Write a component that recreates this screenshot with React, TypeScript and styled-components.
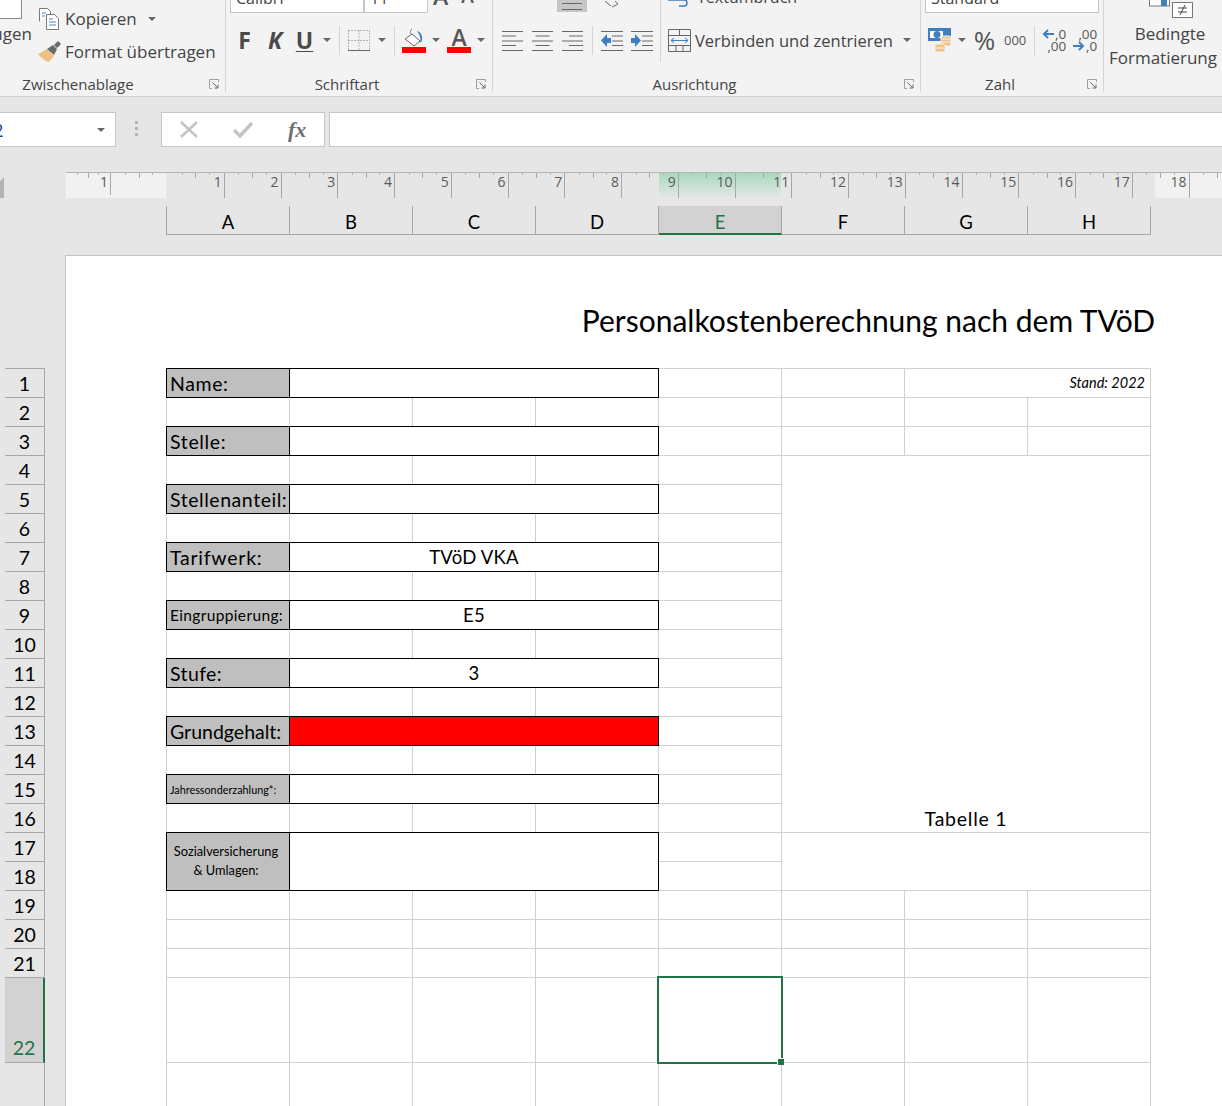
import React from 'react';
import styled, { createGlobalStyle } from 'styled-components';

const UI_FONT = `"Open Sans", "Noto Sans", sans-serif`;
const SHEET_FONT = `Lato, "Noto Sans", sans-serif`;
const COLUMNS = ['A', 'B', 'C', 'D', 'E', 'F', 'G', 'H'];
const GREEN = '#217346';

const GlobalStyle = createGlobalStyle`
  html, body {
    margin: 0;
    padding: 0;
    background: #e6e6e6;
    overflow: hidden;
  }
`;

const Page = styled.div`
  width: 1222px;
  height: 1106px;
  overflow: hidden;
  background: #e6e6e6;
  display: flex;
  flex-direction: column;
  font-family: ${UI_FONT};
`;

/* ---------- ribbon ---------- */

const Ribbon = styled.div`
  height: 96px;
  flex: none;
  display: flex;
  background: #f3f3f3;
  border-bottom: 1px solid #d2d2d2;
  overflow: hidden;
  color: #444;
`;

const Group = styled.div<{ $width: number; $offset?: number }>`
  width: ${(p) => p.$width}px;
  margin-left: ${(p) => p.$offset ?? 0}px;
  flex: none;
  height: 92px;
  display: flex;
  flex-direction: column;
  border-right: 1px solid #d4d4d4;
`;

const GroupBody = styled.div`
  height: 73px;
  flex: none;
  display: flex;
`;

const GroupLabel = styled.div`
  height: 22px;
  flex: none;
  display: flex;
  align-items: center;
  font-size: 15px;
  color: #444;
`;

const GroupTitle = styled.span`
  flex: 1;
  text-align: center;
`;

const LauncherSlot = styled.span`
  width: 24px;
  display: flex;
  justify-content: flex-end;
  padding-right: 6px;
  box-sizing: border-box;
`;

const Stack = styled.div<{ $width?: number; $divider?: boolean }>`
  width: ${(p) => (p.$width ? `${p.$width}px` : 'auto')};
  flex: ${(p) => (p.$width ? 'none' : '1')};
  height: ${(p) => (p.$divider ? '62px' : 'auto')};
  border-right: ${(p) => (p.$divider ? '1px solid #d4d4d4' : 'none')};
`;

const TopRow = styled.div<{ $left?: number }>`
  height: 13px;
  padding-left: ${(p) => p.$left ?? 0}px;
  display: flex;
  overflow: hidden;
`;

const ToolRow = styled.div<{ $left?: number }>`
  height: 30px;
  margin-top: 12px;
  padding-left: ${(p) => p.$left ?? 0}px;
  display: flex;
  align-items: center;
`;

const Combo = styled.div<{ $width: number }>`
  width: ${(p) => p.$width}px;
  height: 13px;
  box-sizing: border-box;
  flex: none;
  background: #fff;
  border: 1px solid #c6c6c6;
  border-top: none;
  padding-left: 5px;
  font-size: 16px;
  line-height: 20px;
  overflow: hidden;
`;

const ComboText = styled.div`
  margin-top: -12px;
`;

const ClippedGlyph = styled.span<{ $size: number; $left: number }>`
  margin-left: ${(p) => p.$left}px;
  margin-top: -18px;
  font-size: ${(p) => p.$size}px;
  line-height: 28px;
  font-weight: 600;
  color: #555;
`;

const Tool = styled.span<{ $left?: number; $width?: number }>`
  margin-left: ${(p) => p.$left ?? 0}px;
  width: ${(p) => (p.$width ? `${p.$width}px` : 'auto')};
  flex: none;
  display: flex;
  align-items: center;
  justify-content: center;
`;

const FontStyle = styled(Tool)<{ $italic?: boolean; $underline?: boolean }>`
  font-size: 23px;
  font-weight: 700;
  line-height: 26px;
  color: #4a4a4a;
  font-style: ${(p) => (p.$italic ? 'italic' : 'normal')};
  text-decoration: ${(p) => (p.$underline ? 'underline' : 'none')};
  text-decoration-thickness: 1px;
  text-underline-offset: 2px;
`;

const Caret = styled.span<{ $left: number }>`
  margin-left: ${(p) => p.$left}px;
  flex: none;
  width: 0;
  height: 0;
  border-left: 4px solid transparent;
  border-right: 4px solid transparent;
  border-top: 4px solid #666;
`;

const ToolDivider = styled.span<{ $left: number }>`
  margin-left: ${(p) => p.$left}px;
  flex: none;
  width: 1px;
  height: 29px;
  background: #d4d4d4;
`;

const ColorTool = styled(Tool)`
  flex-direction: column;
  width: 24px;
`;

const ColorLetter = styled.span`
  font-size: 23px;
  line-height: 20px;
  font-weight: 600;
  color: #555;
`;

const ColorBar = styled.span`
  width: 24px;
  height: 6px;
  background: #ff0000;
`;

const ClipboardColumn = styled.div`
  width: 77px;
  flex: none;
  display: flex;
  flex-direction: column;
  align-items: flex-end;
  font-size: 17px;
  line-height: 22px;
`;

const PasteSheet = styled.div`
  width: 23px;
  height: 19px;
  margin-right: 10px;
  box-sizing: border-box;
  background: #fff;
  border: 1px solid #8a8a8a;
  border-top: none;
`;

const PasteLabel = styled.span`
  margin-top: 4px;
  white-space: nowrap;
`;

const ClipboardActions = styled.div`
  margin-left: 6px;
  padding-top: 8px;
  display: flex;
  flex-direction: column;
  gap: 12px;
`;

const ClipboardAction = styled.div`
  height: 21px;
  display: flex;
  align-items: center;
  font-size: 17px;
  white-space: nowrap;
`;

const ActionIcon = styled.span<{ $inset?: number }>`
  width: ${(p) => 27 - (p.$inset ?? 0)}px;
  padding-left: ${(p) => p.$inset ?? 0}px;
  flex: none;
  display: flex;
  justify-content: flex-start;
`;

const MergeText = styled.span`
  margin-left: 4px;
  font-size: 16.5px;
  white-space: nowrap;
`;

const WrapText = styled.div`
  margin-left: 7px;
  margin-top: -13px;
  font-size: 16px;
  line-height: 20px;
  white-space: nowrap;
`;

const Highlight = styled.span<{ $left: number }>`
  margin-left: ${(p) => p.$left}px;
  width: 30px;
  height: 12px;
  flex: none;
  background: #c6c6c6;
  display: flex;
  justify-content: center;
`;

const PercentSign = styled(Tool)`
  font-size: 26px;
  line-height: 30px;
  color: #555;
`;

const Thousands = styled(Tool)`
  font-size: 13px;
  color: #555;
`;

const DecimalTool = styled(Tool)`
  flex-direction: column;
  align-items: flex-end;
  font-size: 13.5px;
  line-height: 12.5px;
  color: #555;
`;

const DecimalLine = styled.span`
  display: flex;
  align-items: center;
  gap: 1px;
`;

const StylesColumn = styled.div`
  display: flex;
  flex-direction: column;
  align-items: center;
  font-size: 17px;
  line-height: 24px;
  white-space: nowrap;
  width: 114px;
  padding-left: 2px;
`;

const CondFormatSlot = styled.span`
  margin-left: 18px;
  height: 19px;
`;

const BedingtLabel = styled.span`
  margin-top: 3px;
  padding-left: 14px;
`;

/* ---------- formula bar ---------- */

const FormulaBar = styled.div`
  height: 75px;
  flex: none;
  padding-top: 15px;
  box-sizing: border-box;
  display: flex;
  align-items: flex-start;
`;

const FieldBox = styled.div<{ $width?: number; $left?: number }>`
  height: 35px;
  box-sizing: border-box;
  width: ${(p) => (p.$width ? `${p.$width}px` : 'auto')};
  flex: ${(p) => (p.$width ? 'none' : '1')};
  margin-left: ${(p) => p.$left ?? 0}px;
  margin-right: ${(p) => (p.$width ? 0 : -4)}px;
  background: #fff;
  border: 1px solid #c6c6c6;
  display: flex;
  align-items: center;
`;

const NameText = styled.span`
  margin-left: 13px;
  width: 64px;
  flex: none;
  font-size: 18px;
  color: #1f3f8f;
`;

const Grip = styled.div`
  margin-left: 19px;
  margin-top: 9px;
  width: 3px;
  height: 15px;
  background: repeating-linear-gradient(to bottom, #b4b4b4 0 3px, transparent 3px 6px);
`;

const FormulaIcon = styled.span<{ $left: number }>`
  margin-left: ${(p) => p.$left}px;
  display: flex;
`;

const FxText = styled.span`
  margin-left: 35px;
  font-family: "Liberation Serif", serif;
  font-style: italic;
  font-weight: 700;
  font-size: 22px;
  color: #707070;
`;

/* ---------- ruler and column headers ---------- */

const RulerRow = styled.div`
  height: 26px;
  flex: none;
  display: flex;
`;

const RulerCorner = styled.div`
  width: 4px;
  height: 21px;
  margin-top: 5px;
  margin-right: 62px;
  flex: none;
  background: #b4b4b4;
  clip-path: polygon(0 20%, 100% 0, 100% 100%, 0 100%);
`;

const Ruler = styled.div`
  flex: 1;
  display: flex;
  overflow: hidden;
  border-top: 1px solid #b4b4b4;
  background:
    linear-gradient(to bottom, #a6dabd 0%, #e6e6e6 100%) 593px 0 / 122px 100% no-repeat,
    linear-gradient(to right, #f1f1f1 0 100px, #e6e6e6 100px 1089px, #f1f1f1 1089px);
`;

const RulerUnit = styled.div<{ $width?: number; $noTick?: boolean; $margin?: boolean }>`
  width: ${(p) => p.$width ?? 56.75}px;
  flex: none;
  box-sizing: border-box;
  padding-right: 2px;
  text-align: right;
  font-size: 14px;
  line-height: 18px;
  color: #5a5a5a;
  border-right: 1px solid ${(p) => (p.$noTick ? 'transparent' : '#a6a6a6')};
  ${(p) => (p.$margin ? 'height: 22px;' : '')}
  background:
    linear-gradient(#a6a6a6, #a6a6a6) 50% 0 / 1px 5px no-repeat,
    linear-gradient(#b4b4b4, #b4b4b4) 25% 0 / 1px 2px no-repeat,
    linear-gradient(#b4b4b4, #b4b4b4) 75% 0 / 1px 2px no-repeat;
`;

const ColumnHeaderRow = styled.div`
  height: 29px;
  flex: none;
  margin: 8px 0 20px 166px;
  display: flex;
  align-self: flex-start;
  border-left: 1px solid #a6a6a6;
`;

const ColumnHeader = styled.div<{ $selected?: boolean }>`
  width: 123px;
  box-sizing: border-box;
  display: flex;
  align-items: center;
  justify-content: center;
  padding-top: ${(p) => (p.$selected ? 4 : 3)}px;
  font-family: ${SHEET_FONT};
  font-size: 18.5px;
  background: ${(p) => (p.$selected ? '#d2d2d2' : 'transparent')};
  color: ${(p) => (p.$selected ? GREEN : '#000')};
  border-right: 1px solid #a6a6a6;
  border-bottom: ${(p) => (p.$selected ? `2px solid ${GREEN}` : '1px solid #a6a6a6')};
`;

/* ---------- sheet ---------- */

const SheetArea = styled.div`
  flex: 1;
  min-height: 0;
  display: flex;
`;

const Gutter = styled.div`
  width: 65px;
  flex: none;
  box-sizing: border-box;
  padding: 113px 20px 0 5px;
  display: flex;
`;

const RowHeaders = styled.div`
  flex: 1;
  border-top: 1px solid #a6a6a6;
  border-right: 1px solid #a6a6a6;
`;

const RowHeader = styled.div<{ $selected?: boolean; $height?: number }>`
  height: ${(p) => p.$height ?? 29}px;
  box-sizing: border-box;
  margin-right: ${(p) => (p.$selected ? '-1px' : 0)};
  padding-bottom: ${(p) => (p.$selected ? 1 : 0)}px;
  display: flex;
  align-items: flex-end;
  justify-content: center;
  font-family: ${SHEET_FONT};
  font-size: 19.5px;
  line-height: 26px;
  background: ${(p) => (p.$selected ? '#d2d2d2' : 'transparent')};
  color: ${(p) => (p.$selected ? GREEN : '#000')};
  border-bottom: 1px solid #a6a6a6;
  border-right: ${(p) => (p.$selected ? `2px solid ${GREEN}` : 'none')};
`;

const Sheet = styled.div`
  flex: 1;
  background: #fff;
  border-left: 1px solid #c6c6c6;
  border-top: 1px solid #c6c6c6;
  padding-left: 100px;
  font-family: ${SHEET_FONT};
  color: #000;
`;

const Title = styled.div`
  height: 112px;
  box-sizing: border-box;
  padding: 45px 67px 0 0;
  text-align: right;
  font-size: 30px;
  line-height: 38px;
  white-space: nowrap;
`;

const Grid = styled.div`
  width: 984px;
  display: grid;
  grid-template-columns: repeat(8, 123px);
  grid-template-rows: repeat(21, 29px) 85px 85px;
  border-left: 1px solid #d0d0d0;
  border-top: 1px solid #d0d0d0;
`;

const Cell = styled.div<{ $cols?: number; $rows?: number }>`
  grid-column: span ${(p) => p.$cols ?? 1};
  grid-row: span ${(p) => p.$rows ?? 1};
  box-sizing: border-box;
  border-right: 1px solid #d0d0d0;
  border-bottom: 1px solid #d0d0d0;
`;

const Boxed = styled(Cell)`
  margin: -1px 0 0 -1px;
  border: 1px solid #000;
`;

const LabelCell = styled(Boxed)<{ $size?: number; $tracking?: number }>`
  background: #bfbfbf;
  display: flex;
  align-items: flex-end;
  padding: 0 0 1px 3px;
  font-size: ${(p) => p.$size ?? 19.5}px;
  letter-spacing: ${(p) => p.$tracking ?? 0.55}px;
  line-height: 25px;
  white-space: nowrap;
`;

const WrappedLabelCell = styled(Boxed)`
  background: #bfbfbf;
  display: flex;
  align-items: center;
  justify-content: center;
  text-align: center;
  padding: 0 4px 2px 0;
  font-size: 12.8px;
  line-height: 19px;
`;

const ValueCell = styled(Boxed)<{ $fill?: string }>`
  grid-column: span 3;
  background: ${(p) => p.$fill ?? 'transparent'};
  display: flex;
  align-items: flex-end;
  justify-content: center;
  padding-bottom: 1px;
  font-size: 18.5px;
  letter-spacing: 0.25px;
  line-height: 26px;
`;

const StandCell = styled(Cell)`
  display: flex;
  align-items: center;
  justify-content: flex-end;
  padding: 0 5px 1px 0;
  font-size: 14.5px;
  font-style: italic;
`;

const TableNote = styled(Cell)`
  display: flex;
  align-items: flex-end;
  justify-content: center;
  font-size: 19.5px;
  letter-spacing: 0.75px;
  line-height: 26px;
`;

const SelectedCell = styled(Cell)`
  position: relative;
  margin: -2px -1px -1px -2px;
  border: 2px solid ${GREEN};
`;

const FillHandle = styled.span`
  position: absolute;
  right: -3px;
  bottom: -3px;
  width: 6px;
  height: 6px;
  background: ${GREEN};
  border: 1px solid #fff;
  border-width: 1px 0 0 1px;
`;

/* ---------- icons ---------- */

const Launcher = () => (
  <svg width="10" height="10" viewBox="0 0 10 10" fill="none">
    <path d="M9.5 3V.5H.5v9H3" stroke="#a0a0a0" />
    <path d="M3.5 3.5l5 5M9 5.5V9H5.5" stroke="#666" />
  </svg>
);

const CopyIcon = () => (
  <svg width="21" height="22" viewBox="0 0 21 22" fill="none">
    <path d="M.5 13.5V.5h8l3 3v3" stroke="#7a7a7a" fill="#fff" />
    <path d="M7.5 6.5h8l4 4v11h-12z" stroke="#7a7a7a" fill="#fff" />
    <path d="M10 11h4M10 14h7M10 17h7M3 5h4M3 8h3" stroke="#4a86c0" />
  </svg>
);

const BrushIcon = () => (
  <svg width="24" height="21" viewBox="0 0 24 21">
    <path d="M0 13l9-5 7 7-5 6C7 20 3 17 0 13z" fill="#edc186" />
    <path d="M9 8l6-4 4 4-3 6z" fill="#6a6a6a" />
    <path d="M16 4l4-4 3 3-4 4z" fill="#6a6a6a" />
  </svg>
);

const BordersIcon = () => (
  <svg width="22" height="21" viewBox="0 0 22 21" fill="none">
    <path d="M.5.5h21M.5.5v20M21.5.5v20M11 .5v20M.5 10.5h21" stroke="#777" strokeDasharray="1 2" />
    <path d="M0 20.5h22" stroke="#666" />
  </svg>
);

const FillIcon = () => (
  <svg width="24" height="26" viewBox="0 -2 24 26" fill="none">
    <path d="M10 5l8 7-6 5-9-7z" fill="#fff" stroke="#666" />
    <path d="M10 0c-2 1-2 4 0 6" stroke="#777" />
    <path d="M15 2c4 1 6 5 5 10l-2 2c1-4 0-8-3-12z" fill="#4a86c0" />
    <rect x="0" y="18" width="24" height="6" fill="#ff0000" />
  </svg>
);

const AlignIcon = ({ align }: { align: 'left' | 'center' | 'right' }) => {
  const short = 14;
  const x = align === 'left' ? 0 : align === 'center' ? 3.5 : 7;
  return (
    <svg width="21" height="21" viewBox="0 0 21 21" stroke="#666">
      <path d="M0 1.5h21M0 11h21M0 20.5h21" />
      <path d={`M${x} 6h${short}M${x} 15.5h${short}`} />
    </svg>
  );
};

const IndentIcon = ({ increase }: { increase?: boolean }) => (
  <svg width="22" height="21" viewBox="0 0 22 21">
    <path d="M0 1.5h22M0 20.5h22M11 6h11M11 11h11M11 15.5h11" stroke="#666" fill="none" />
    {increase ? (
      <path d="M0 8h4V4l6 6.500-6 6.500v-4H0z" fill="#3f7fbf" />
    ) : (
      <path d="M10 8H6V4L0 10.500l6 6.500v-4h4z" fill="#3f7fbf" />
    )}
  </svg>
);

const MergeIcon = () => (
  <svg width="23" height="23" viewBox="0 0 23 23" fill="none">
    <path d="M.5.500h22v22H.5zM.5 6.500h22M.5 16.500h22M11.500.500v6M8 16.500v6M15 16.500v6" stroke="#666" />
    <path d="M3 11.500h17M6 9l-3 2.500L6 14M17 9l3 2.500-3 2.500" stroke="#3f7fbf" />
  </svg>
);

const MoneyIcon = () => (
  <svg width="24" height="24" viewBox="0 0 24 24">
    <path d="M0 0h23v13H0z" fill="#3f7fbf" />
    <rect x="2" y="3" width="13" height="7" fill="#fff" />
    <circle cx="9" cy="6.500" r="3.500" fill="#3f7fbf" />
    <rect x="13" y="8" width="10" height="10" rx="2" fill="#f0c388" stroke="#f3f3f3" />
    <path d="M14 11h8M14 14h8" stroke="#f3f3f3" />
    <rect x="7" y="16" width="10" height="8" rx="2" fill="#f0c388" stroke="#f3f3f3" />
    <path d="M8 20h8" stroke="#f3f3f3" />
  </svg>
);

const SmallArrow = ({ right }: { right?: boolean }) => (
  <svg width="12" height="10" viewBox="0 0 12 10" fill="none" stroke="#3f7fbf" strokeWidth="2">
    {right ? <path d="M0 5h10M6 1l4 4-4 4" /> : <path d="M12 5H2M6 1L2 5l4 4" />}
  </svg>
);

const CondFormatIcon = () => (
  <svg width="46" height="19" viewBox="0 0 46 19">
    <rect x="0.500" y="-4" width="20" height="10" fill="#fff" stroke="#777" />
    <rect x="12" y="-4" width="6" height="10" fill="#3f7fbf" />
    <rect x="23.500" y="2.500" width="20" height="15" fill="#fff" stroke="#777" />
    <path d="M29 8h9M29 12h9M36 5l-5 10" stroke="#444" fill="none" />
  </svg>
);

const CrossIcon = () => (
  <svg width="20" height="17" viewBox="0 0 20 17" stroke="#c4c4c4" strokeWidth="2.500" fill="none">
    <path d="M2 1l16 15M18 1L2 16" />
  </svg>
);

const CheckIcon = () => (
  <svg width="20" height="17" viewBox="0 0 20 17" stroke="#c4c4c4" strokeWidth="3.500" fill="none">
    <path d="M1 9l6 6L19 2" />
  </svg>
);

/* ---------- sheet data ---------- */

interface FormRow {
  label: string;
  value?: string;
  size?: number;
  tracking?: number;
  fill?: string;
}

const formRows: FormRow[] = [
  { label: 'Stellenanteil:' },
  { label: 'Tarifwerk:', value: 'TVöD VKA', tracking: 0.75 },
  { label: 'Eingruppierung:', value: 'E5', size: 15.5, tracking: 0.35 },
  { label: 'Stufe:', value: '3', tracking: 0.4 },
  { label: 'Grundgehalt:', fill: '#ff0000', tracking: 0 },
  { label: 'Jahressonderzahlung*:', size: 10.8, tracking: 0 },
];

const plainCells = (count: number) =>
  Array.from({ length: count }, (_, i) => <Cell key={i} />);

const App = () => {
  const rulerNumbers = Array.from({ length: 19 }, (_, i) => i + 1);
  const rowNumbers = Array.from({ length: 21 }, (_, i) => i + 1);

  return (
    <Page>
      <GlobalStyle />
      <Ribbon>
        <Group $width={270} $offset={-45}>
          <GroupBody>
            <ClipboardColumn>
              <PasteSheet />
              <PasteLabel>Einfügen</PasteLabel>
            </ClipboardColumn>
            <ClipboardActions>
              <ClipboardAction>
                <ActionIcon $inset={1}><CopyIcon /></ActionIcon>
                Kopieren
                <Caret $left={11} />
              </ClipboardAction>
              <ClipboardAction>
                <ActionIcon><BrushIcon /></ActionIcon>
                Format übertragen
              </ClipboardAction>
            </ClipboardActions>
          </GroupBody>
          <GroupLabel>
            <GroupTitle>Zwischenablage</GroupTitle>
            <LauncherSlot><Launcher /></LauncherSlot>
          </GroupLabel>
        </Group>

        <Group $width={266}>
          <GroupBody>
            <Stack>
              <TopRow $left={4}>
                <Combo $width={134}><ComboText>Calibri</ComboText></Combo>
                <Combo $width={64}><ComboText>11</ComboText></Combo>
                <ClippedGlyph $size={23} $left={5}>A</ClippedGlyph>
                <ClippedGlyph $size={19} $left={13}>A</ClippedGlyph>
              </TopRow>
              <ToolRow $left={13}>
                <FontStyle $width={11}>F</FontStyle>
                <FontStyle $width={16} $left={17} $italic>K</FontStyle>
                <FontStyle $width={15} $left={14} $underline>U</FontStyle>
                <Caret $left={11} />
                <ToolDivider $left={8} />
                <Tool $left={8}><BordersIcon /></Tool>
                <Caret $left={8} />
                <ToolDivider $left={8} />
                <Tool $left={7}><FillIcon /></Tool>
                <Caret $left={6} />
                <ColorTool $left={7}>
                  <ColorLetter>A</ColorLetter>
                  <ColorBar />
                </ColorTool>
                <Caret $left={6} />
              </ToolRow>
            </Stack>
          </GroupBody>
          <GroupLabel>
            <GroupTitle>Schriftart</GroupTitle>
            <LauncherSlot><Launcher /></LauncherSlot>
          </GroupLabel>
        </Group>

        <Group $width={427}>
          <GroupBody>
            <Stack $width={167} $divider>
              <TopRow>
                <Highlight $left={64}>
                  <svg width="20" height="12" stroke="#666"><path d="M0 3.500h20M0 9.500h20" /></svg>
                </Highlight>
                <Tool $left={16}>
                  <svg width="16" height="12" stroke="#666" fill="none"><path d="M2 0l6 5M12 0l3 3-6 3" /></svg>
                </Tool>
              </TopRow>
              <ToolRow $left={9}>
                <Tool><AlignIcon align="left" /></Tool>
                <Tool $left={9}><AlignIcon align="center" /></Tool>
                <Tool $left={9}><AlignIcon align="right" /></Tool>
                <ToolDivider $left={9} />
                <Tool $left={8}><IndentIcon /></Tool>
                <Tool $left={8}><IndentIcon increase /></Tool>
              </ToolRow>
            </Stack>
            <Stack>
              <TopRow $left={7}>
                <svg width="22" height="8" fill="none"><path d="M0 0h16a3 3 0 0 1 0 6h-5" stroke="#3f7fbf" strokeWidth="1.500" /></svg>
                <WrapText>Textumbruch</WrapText>
              </TopRow>
              <ToolRow $left={7}>
                <Tool><MergeIcon /></Tool>
                <MergeText>Verbinden und zentrieren</MergeText>
                <Caret $left={10} />
              </ToolRow>
            </Stack>
          </GroupBody>
          <GroupLabel>
            <GroupTitle>Ausrichtung</GroupTitle>
            <LauncherSlot><Launcher /></LauncherSlot>
          </GroupLabel>
        </Group>

        <Group $width={182}>
          <GroupBody>
            <Stack>
              <TopRow $left={4}>
                <Combo $width={174}><ComboText>Standard</ComboText></Combo>
              </TopRow>
              <ToolRow $left={7}>
                <Tool><MoneyIcon /></Tool>
                <Caret $left={6} />
                <PercentSign $left={8} $width={21}>%</PercentSign>
                <Thousands $left={9}>000</Thousands>
                <ToolDivider $left={8} />
                <DecimalTool $left={8} $width={23}>
                  <DecimalLine><SmallArrow />,0</DecimalLine>
                  <DecimalLine>,00</DecimalLine>
                </DecimalTool>
                <DecimalTool $left={8} $width={23}>
                  <DecimalLine>,00</DecimalLine>
                  <DecimalLine><SmallArrow right />,0</DecimalLine>
                </DecimalTool>
              </ToolRow>
            </Stack>
          </GroupBody>
          <GroupLabel>
            <GroupTitle>Zahl</GroupTitle>
            <LauncherSlot><Launcher /></LauncherSlot>
          </GroupLabel>
        </Group>

        <StylesColumn>
          <CondFormatSlot><CondFormatIcon /></CondFormatSlot>
          <BedingtLabel>Bedingte</BedingtLabel>
          <span>Formatierung</span>
        </StylesColumn>
      </Ribbon>

      <FormulaBar>
        <FieldBox $width={157} $left={-41}>
          <NameText>E22</NameText>
          <Caret $left={60} />
        </FieldBox>
        <Grip />
        <FieldBox $width={164} $left={23}>
          <FormulaIcon $left={17}><CrossIcon /></FormulaIcon>
          <FormulaIcon $left={34}><CheckIcon /></FormulaIcon>
          <FxText>fx</FxText>
        </FieldBox>
        <FieldBox $left={4} />
      </FormulaBar>

      <RulerRow>
        <RulerCorner />
        <Ruler>
          <RulerUnit $width={45} $margin>1</RulerUnit>
          <RulerUnit $width={57} $noTick />
          {rulerNumbers.map((n) => (
            <RulerUnit key={n}>{n}</RulerUnit>
          ))}
        </Ruler>
      </RulerRow>

      <ColumnHeaderRow>
        {COLUMNS.map((c) => (
          <ColumnHeader key={c} $selected={c === 'E'}>{c}</ColumnHeader>
        ))}
      </ColumnHeaderRow>

      <SheetArea>
        <Gutter>
          <RowHeaders>
            {rowNumbers.map((n) => (
              <RowHeader key={n}>{n}</RowHeader>
            ))}
            <RowHeader $selected $height={85}>22</RowHeader>
          </RowHeaders>
        </Gutter>

        <Sheet>
          <Title>Personalkostenberechnung nach dem TVöD</Title>
          <Grid>
            <LabelCell $tracking={0.6}>Name:</LabelCell>
            <ValueCell />
            <Cell />
            <Cell />
            <StandCell $cols={2}>Stand: 2022</StandCell>
            {plainCells(8)}

            <LabelCell $tracking={0.65}>Stelle:</LabelCell>
            <ValueCell />
            {plainCells(4)}
            {plainCells(5)}
            <TableNote $cols={3} $rows={13}>Tabelle 1</TableNote>

            {formRows.map((row) => (
              <React.Fragment key={row.label}>
                <LabelCell $size={row.size} $tracking={row.tracking}>{row.label}</LabelCell>
                <ValueCell $fill={row.fill}>{row.value}</ValueCell>
                <Cell />
                {plainCells(5)}
              </React.Fragment>
            ))}

            <WrappedLabelCell $rows={2}>
              Sozialversicherung<br />&amp; Umlagen:
            </WrappedLabelCell>
            <ValueCell $rows={2} />
            <Cell />
            <Cell $cols={3} $rows={2} />
            <Cell />

            {plainCells(24)}
            {plainCells(4)}
            <SelectedCell><FillHandle /></SelectedCell>
            {plainCells(3)}
            {plainCells(8)}
          </Grid>
        </Sheet>
      </SheetArea>
    </Page>
  );
};

export default App;
